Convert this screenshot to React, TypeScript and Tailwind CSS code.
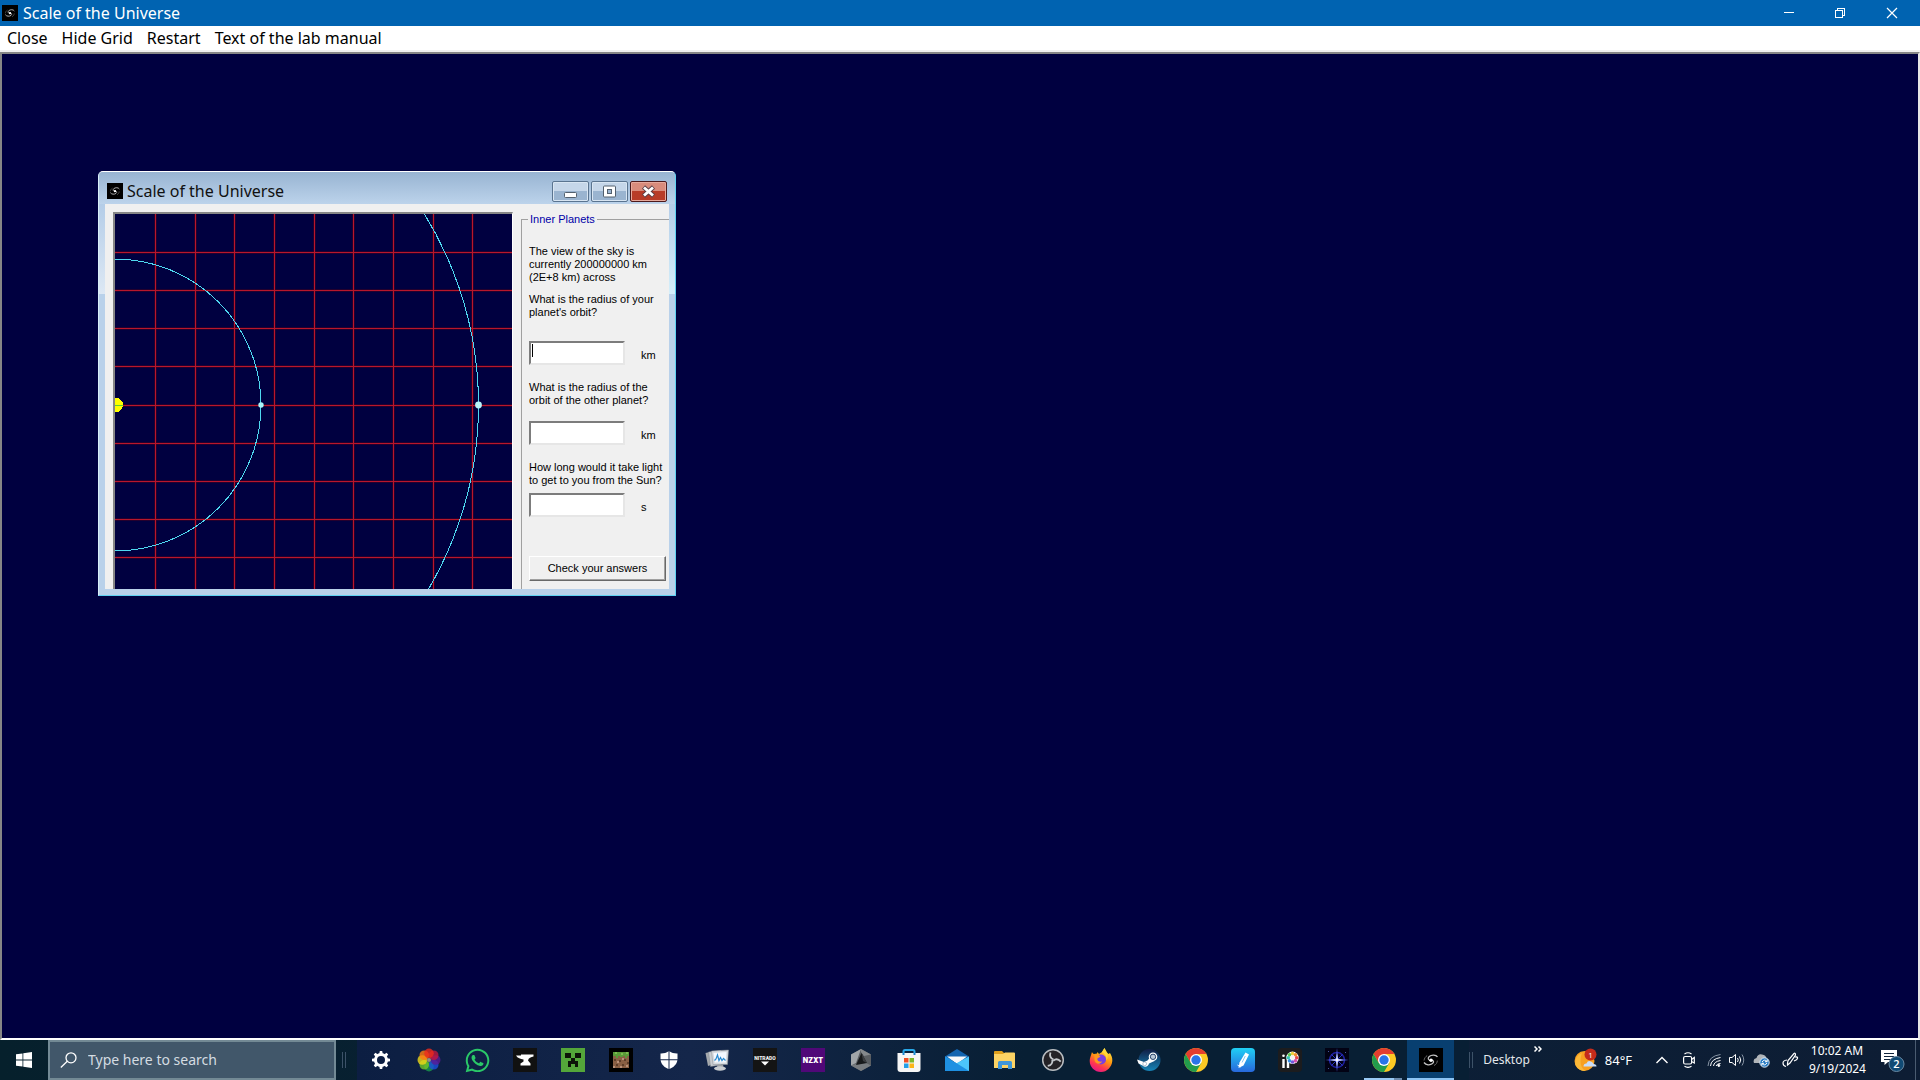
import type { ReactNode } from "react"
import { FaWhatsapp } from "react-icons/fa"

const VERTICAL_LINES = [40, 80, 119, 159, 199, 238, 278, 318, 357]
const HORIZONTAL_LINES = [38, 76, 114, 152, 191, 229, 267, 305, 343]

function GalaxyIcon({ className }: { className: string }) {
  return (
    <svg className={className} viewBox="0 0 24 24" fill="none">
      <rect width="24" height="24" fill="#000" />
      <path d="M18.500 9C17 6.500 12.500 6.500 10.200 8.500C8.500 10.200 9 12.500 12 12.500" stroke="#c4c4c4" strokeWidth="1.300" />
      <path d="M12 12C14.800 12 15.300 14 13.500 15.600C11 17.500 7 17.200 5 14.500" stroke="#c4c4c4" strokeWidth="1.300" />
      <path d="M5 12.500C5.200 10.500 6.500 8.500 8.200 7.600M15 17.500C17 16.800 18.400 14.500 18.300 12.600" stroke="#666" strokeWidth="1" />
      <circle cx="12" cy="12.200" r="1.700" fill="#fff" />
    </svg>
  )
}

function TitleBar() {
  return (
    <header className="flex h-[26px] shrink-0 items-center bg-[#0063b1] pr-px pl-0.5 text-white">
      <GalaxyIcon className="size-4" />
      <h1 className="ml-[5px] flex-1 text-[16px] leading-6">Scale of the Universe</h1>
      <button aria-label="Minimize" className="flex h-full w-[51px] items-center justify-center">
        <svg className="size-3" viewBox="0 0 12 12" stroke="currentColor" shapeRendering="crispEdges">
          <path d="M1 5.500H11" />
        </svg>
      </button>
      <button aria-label="Restore" className="flex h-full w-[51px] items-center justify-center">
        <svg className="size-3" viewBox="0 0 12 12" fill="none" stroke="currentColor" shapeRendering="crispEdges">
          <path d="M1.5 3.5H8.5V10.5H1.5ZM3.5 3V1.5H10.5V8.5H9" />
        </svg>
      </button>
      <button aria-label="Close window" className="flex h-full w-[54px] items-center justify-center">
        <svg className="size-3" viewBox="0 0 12 12" stroke="currentColor" strokeWidth="1.2">
          <path d="M1 1L11 11M11 1L1 11" />
        </svg>
      </button>
    </header>
  )
}

function MenuBar() {
  return (
    <nav className="flex h-[26px] shrink-0 items-end gap-[14px] border-b-2 border-[#f0f0f0] bg-white pl-[7px] text-[16px] leading-6 text-black">
      <button>Close</button>
      <button>Hide Grid</button>
      <button>Restart</button>
      <button>Text of the lab manual</button>
    </nav>
  )
}

function OrbitView() {
  return (
    <svg className="block" width="397" height="376" viewBox="0 0 397 376" shapeRendering="crispEdges">
      <rect width="397" height="376" fill="#000040" />
      <g stroke="#500018" strokeWidth="3" strokeOpacity="0.45">
        {VERTICAL_LINES.map((x) => (
          <line key={x} x1={x + 0.5} x2={x + 0.5} y1="0" y2="376" />
        ))}
        {HORIZONTAL_LINES.map((y) => (
          <line key={y} x1="0" x2="397" y1={y + 0.5} y2={y + 0.5} />
        ))}
      </g>
      <g stroke="#b8162c">
        {VERTICAL_LINES.map((x) => (
          <line key={x} x1={x + 0.5} x2={x + 0.5} y1="0" y2="376" />
        ))}
        {HORIZONTAL_LINES.map((y) => (
          <line key={y} x1="0" x2="397" y1={y + 0.5} y2={y + 0.5} />
        ))}
      </g>
      <g fill="none" stroke="#4fd8f0">
        <circle cx="0" cy="191" r="146" />
        <circle cx="0" cy="191" r="363.500" />
      </g>
      <circle cx="1" cy="191" r="7" fill="#ff0" />
      <path d="M0 191.500H8" stroke="#60d030" />
      <g shapeRendering="auto">
        <circle cx="146" cy="191" r="2.700" fill="#a8f4f8" />
        <circle cx="363.500" cy="191" r="3.400" fill="#b8f6fa" />
      </g>
    </svg>
  )
}

type QuestionProps = {
  id: string
  unit: string
  className: string
  gap: string
  caret?: boolean
  children: ReactNode
}

function Question({ id, unit, className, gap, caret, children }: QuestionProps) {
  return (
    <div className={className}>
      <label htmlFor={id} className="block">
        {children}
      </label>
      <div className={`relative flex items-end ${gap}`}>
        <input
          id={id}
          type="text"
          className="h-6 w-24 border-2 border-t-[#7c7c7c] border-r-[#e6e6e6] border-b-[#e6e6e6] border-l-[#7c7c7c] bg-white px-0.5 outline-none"
        />
        {caret && <span className="absolute top-[3px] left-[3px] h-[13px] w-px bg-black" />}
        <span className="ml-4 pb-[3px]">{unit}</span>
      </div>
    </div>
  )
}

function QuestionPanel() {
  return (
    <fieldset className="mt-px ml-2 min-w-0 flex-1 border-t border-l border-[#a0a0a0] pl-[7px] font-['Liberation_Sans',Arial,sans-serif] text-[11px] leading-[13px] text-black">
      <legend className="-ml-px px-0.5 text-[#0000a8]">Inner Planets</legend>
      <p className="mt-[19px]">
        The view of the sky is
        <br />
        currently 200000000 km
        <br />
        (2E+8 km) across
      </p>
      <Question id="own-orbit" unit="km" className="mt-[9px]" gap="mt-[22px]" caret>
        What is the radius of your
        <br />
        planet's orbit?
      </Question>
      <Question id="other-orbit" unit="km" className="mt-4" gap="mt-[14px]">
        What is the radius of the
        <br />
        orbit of the other planet?
      </Question>
      <Question id="light-time" unit="s" className="mt-4" gap="mt-[6px]">
        How long would it take light
        <br />
        to get to you from the Sun?
      </Question>
      <button className="mt-[39px] h-[25px] w-[137px] border border-t-white border-r-[#696969] border-b-[#696969] border-l-white bg-[#f0f0f0] shadow-[inset_-1px_-1px_0_#a0a0a0]">
        Check your answers
      </button>
    </fieldset>
  )
}

function ChildWindow() {
  return (
    <section className="absolute top-[117px] left-[96px] flex h-[425px] w-[578px] flex-col overflow-hidden rounded-t-[5px] border border-t-white border-r-[#5fd3f3] border-b-[#5fd3f3] border-l-[#d8eef8] bg-[#b9d1ea]">
      <div className="flex h-8 shrink-0 items-center bg-linear-to-b from-[#98b4d2] to-[#bcd3eb] pt-[6px] pr-2 pl-2 text-[#111]">
        <GalaxyIcon className="size-4" />
        <h2 className="ml-1 flex-1 text-[16px] leading-6">Scale of the Universe</h2>
        <div className="flex gap-0.5">
          <button
            aria-label="Minimize child window"
            className="flex h-[21px] w-[37px] items-center justify-center rounded-[2px] border border-[#5a7490] bg-linear-to-b from-[#c5d6e9] from-50% to-[#9ab4d0] to-50% shadow-[inset_0_0_0_1px_#d8e5f2]"
          >
            <svg className="size-[15px]" viewBox="0 0 15 15">
              <rect x="1.500" y="8.500" width="12" height="5" rx="1" fill="#fff" stroke="#53606e" />
            </svg>
          </button>
          <button
            aria-label="Maximize child window"
            className="flex h-[21px] w-[37px] items-center justify-center rounded-[2px] border border-[#5a7490] bg-linear-to-b from-[#c5d6e9] from-50% to-[#9ab4d0] to-50% shadow-[inset_0_0_0_1px_#d8e5f2]"
          >
            <svg className="size-[15px]" viewBox="0 0 15 15" fill="none">
              <rect x="1.500" y="2" width="12" height="11" rx="1" fill="#fff" stroke="#53606e" />
              <rect x="5.500" y="5.500" width="4" height="4" fill="#9ab4d0" stroke="#53606e" />
            </svg>
          </button>
          <button
            aria-label="Close child window"
            className="flex h-[21px] w-[37px] items-center justify-center rounded-[2px] border border-[#4c1a1c] bg-linear-to-b from-[#d98c7c] from-45% to-[#b83c28] to-50% shadow-[inset_0_0_0_1px_#e6a99c]"
          >
            <svg className="size-[15px]" viewBox="0 0 15 15">
              <path d="M2.500 3L12.500 12M12.500 3L2.500 12" stroke="#5b4048" strokeWidth="4.600" />
              <path d="M3 3.500L12 11.500M12 3.500L3 11.500" stroke="#fff" strokeWidth="2.800" />
            </svg>
          </button>
        </div>
      </div>
      <div className="flex min-h-0 flex-1">
        <div className="h-[90px] w-1.5 bg-linear-to-b from-[#b4cde8] to-[#dde8f4]" />
        <div className="flex min-w-0 flex-1 overflow-hidden bg-[#f0f0f0] pt-2 pl-2">
          <div className="shrink-0 border-t-2 border-r border-l-2 border-t-[#868686] border-r-white border-l-[#868686]">
            <OrbitView />
          </div>
          <QuestionPanel />
        </div>
        <div className="h-[90px] w-1.5 bg-linear-to-b from-[#b4cde8] to-[#d5effa]" />
      </div>
      <div className="h-1.5 shrink-0" />
    </section>
  )
}

const GEAR_TEETH = [0, 45, 90, 135, 180, 225, 270, 315]

function SettingsIcon() {
  return (
    <svg className="size-6" viewBox="0 0 24 24" fill="none">
      <circle cx="12" cy="12" r="5.500" stroke="#fff" strokeWidth="3" />
      {GEAR_TEETH.map((angle) => (
        <path key={angle} d="M10.300 6L10.800 3H13.200L13.700 6Z" fill="#fff" transform={`rotate(${angle} 12 12)`} />
      ))}
    </svg>
  )
}

const PETALS = [
  { angle: 180, color: "#1a9a4c" },
  { angle: 225, color: "#70c828" },
  { angle: 270, color: "#f0d818" },
  { angle: 315, color: "#ff7a10" },
  { angle: 135, color: "#1c50dc" },
  { angle: 90, color: "#5c1a96" },
  { angle: 45, color: "#c41840" },
  { angle: 0, color: "#ee2a1c" },
]

function PetalsIcon() {
  return (
    <svg className="size-6" viewBox="0 0 24 24">
      {PETALS.map((petal) => (
        <circle key={petal.angle} cx="12" cy="5.300" r="4.800" fill={petal.color} fillOpacity="0.8" transform={`rotate(${petal.angle} 12 12)`} />
      ))}
      <circle cx="12" cy="12" r="2" fill="#9a9080" />
    </svg>
  )
}

function AnvilIcon() {
  return (
    <svg className="size-6" viewBox="0 0 24 24">
      <rect width="24" height="24" fill="#111" />
      <path d="M3 7.500H8V6.500H20.500V8.500C18 8.800 15.500 10 15 12.500L17.500 15.500V17.500H7.500V15.500L10.500 13.500V11.500C7.500 11.200 4.500 10 3 7.500Z" fill="#fff" />
    </svg>
  )
}

function CreeperIcon() {
  return (
    <svg className="size-6" viewBox="0 0 24 24">
      <rect width="24" height="24" fill="#54a63a" />
      <path d="M4 5H10V10H4ZM14 5H20V10H14ZM10 10H14V13H17V19H14V16H10V19H7V13H10Z" fill="#0c1408" />
    </svg>
  )
}

function GrassBlockIcon() {
  return (
    <svg className="size-6" viewBox="0 0 24 24" shapeRendering="crispEdges">
      <rect width="24" height="24" fill="#000" />
      <rect x="4" y="4" width="16" height="16" fill="#8a6044" />
      <path d="M4 4H20V8H18V10H16V8H14V9H11V8H9V10H7V8H4Z" fill="#5a9a38" />
      <path d="M6 4H8V6H6ZM12 5H14V7H12ZM17 4H19V6H17Z" fill="#7cbc50" />
      <path d="M5 11H7V13H5ZM10 12H12V14H10ZM15 11H17V13H15ZM7 16H9V18H7ZM13 16H15V18H13ZM18 14H20V16H18Z" fill="#5e3e2a" />
      <path d="M8 13H10V15H8ZM13 10H15V12H13ZM17 17H19V19H17ZM4 18H6V20H4ZM11 18H13V20H11Z" fill="#b89078" />
    </svg>
  )
}

function ShieldIcon() {
  return (
    <svg className="size-6" viewBox="0 0 24 24" fill="#fff">
      <path d="M11.500 3.300C9.500 5 6.500 5.600 3.500 5.500V11.300H11.500ZM12.500 3.300C14.500 5 17.500 5.600 20.500 5.500V11.300H12.500ZM3.600 12.300H11.500V21C7.500 19.500 4.300 16.500 3.600 12.300ZM20.400 12.300H12.500V21C16.500 19.500 19.700 16.500 20.400 12.300Z" />
    </svg>
  )
}

function MonitorsIcon() {
  return (
    <svg className="size-6" viewBox="0 0 24 24">
      <path d="M.500 5L9 3V16L3 18Z" fill="#a4a8ac" />
      <path d="M3.500 4L16 2.500V17L5.500 18.500Z" fill="#c8ccd0" stroke="#80868c" strokeWidth=".5" />
      <path d="M6.500 3L23.500 2L22.500 16.500L8 16.500Z" fill="#d6dade" stroke="#8a9096" strokeWidth=".5" />
      <path d="M8.500 5L21.500 4L20.800 14.500L9.800 14.500Z" fill="#f4f9ff" />
      <path d="M9.500 12.500L11 11L12.500 7L14 12.500L15.500 9.500L17 12.500L18.500 10.500L20.500 12.500" fill="none" stroke="#2a8ad0" strokeWidth="1.200" />
      <path d="M12.500 16.500H18L18.500 19H12Z" fill="#9a9ea2" />
      <ellipse cx="15" cy="20.500" rx="6" ry="2.200" fill="#c8ccd0" />
    </svg>
  )
}

function NitradoIcon() {
  return (
    <svg className="size-6" viewBox="0 0 24 24">
      <rect width="24" height="24" fill="#141414" />
      <text x="12" y="12" textAnchor="middle" fontFamily="Roboto, sans-serif" fontSize="5" fontWeight="900" fill="#f0f0f0">
        NITRADO
      </text>
      <path d="M8 13.500H16L12 17.500Z" fill="#fff" />
    </svg>
  )
}

function NzxtIcon() {
  return (
    <svg className="size-6" viewBox="0 0 24 24">
      <rect width="24" height="24" fill="#500878" />
      <text x="12" y="14.500" textAnchor="middle" fontFamily="Inter, sans-serif" fontSize="7" fontWeight="900" fill="#fff">
        NZXT
      </text>
    </svg>
  )
}

function HexIcon() {
  return (
    <svg className="size-6" viewBox="0 0 24 24">
      <path d="M12 1L22 6.500V17.500L12 23L2 17.500V6.500Z" fill="#5a5e62" />
      <path d="M12 1L22 6.500L15 8L12 4Z" fill="#85898c" />
      <path d="M12 1L2 6.500V17.500L7 15Z" fill="#a2a6a9" />
      <path d="M2 17.500L12 23L22 17.500L17 15L7 16Z" fill="#787c80" />
      <path d="M12.500 5L18 15L7 17Z" fill="#17191b" />
      <path d="M12.500 5L18 15L14 13Z" fill="#3b3e41" />
    </svg>
  )
}

function StoreIcon() {
  return (
    <svg className="size-6" viewBox="0 0 24 24">
      <path d="M6.500 7V3.500Q6.500 2 8 2H16Q17.500 2 17.500 3.500V7" fill="none" stroke="#28a8e8" strokeWidth="2" />
      <path d="M.500 5H23.500V21Q23.500 24 20.500 24H3.500Q.500 24 .500 21Z" fill="#f6f6f6" />
      <path d="M6.500 5V7M17.500 5V7" stroke="#1c86d0" strokeWidth="2" />
      <path d="M7 10H11.500V14.500H7Z" fill="#f04f24" />
      <path d="M12.500 10H17V14.500H12.500Z" fill="#7db82b" />
      <path d="M7 15.500H11.500V20H7Z" fill="#22a0e8" />
      <path d="M12.500 15.500H17V20H12.500Z" fill="#fbb518" />
    </svg>
  )
}

function MailIcon() {
  return (
    <svg className="size-6" viewBox="0 0 24 24">
      <path d="M0 8.500L12 1L24 8.500V12H0Z" fill="#1264b0" />
      <path d="M2 8.500H22L12 16Z" fill="#f6f8fa" />
      <path d="M0 8.500L24 23H0Z" fill="#2ba8f0" />
      <path d="M24 8.500V23H1L11 15.500Z" fill="#4cc6fa" />
      <path d="M0 8.500L12 15.500L24 23H0Z" fill="#1e90e2" />
    </svg>
  )
}

function FolderIcon() {
  return (
    <svg className="size-6" viewBox="0 0 24 24">
      <path d="M1 4Q1 3 2 3H9L11 5H21Q22 5 22 6V12H1Z" fill="#e0a01c" />
      <path d="M1 6H10L12 4.500H21Q22 4.500 22 5.500V20H1Z" fill="#fcd364" />
      <path d="M5 21V14.500Q5 13 6.500 13H17.500Q19 13 19 14.500V21H15V17H9V21Z" fill="#3f96d8" />
    </svg>
  )
}

function ObsIcon() {
  return (
    <svg className="size-6" viewBox="0 0 24 24" fill="none">
      <circle cx="12" cy="12" r="10.300" fill="#242226" stroke="#b8bcc0" strokeWidth="1.500" />
      {[0, 120, 240].map((angle) => (
        <path key={angle} d="M12.500 11.500C10 10.500 8.300 8 9.500 4.500" stroke="#c4c8cc" strokeWidth="1.800" transform={`rotate(${angle} 12 12)`} />
      ))}
    </svg>
  )
}

function FirefoxIcon() {
  return (
    <svg className="size-6" viewBox="0 0 24 24">
      <defs>
        <linearGradient id="fox" x1="0.800" y1="0" x2="0.300" y2="1">
          <stop offset="0" stopColor="#fff04a" />
          <stop offset="0.450" stopColor="#ff980e" />
          <stop offset="0.750" stopColor="#ff3750" />
          <stop offset="1" stopColor="#e31587" />
        </linearGradient>
      </defs>
      <path d="M3 4C3.500 5 4 5.700 5 6L8 5.500L8.500 4L10 6L13 4L15.500 0C16 3 18 4 19.500 6L21 5C22.500 7.500 23.500 10 23.300 13C22.800 19 18 24 12 24C5.500 24 .700 19 .700 13C.700 9.500 2 8 3 4Z" fill="url(#fox)" />
      <circle cx="12" cy="11.500" r="5" fill="#7a3fe0" />
      <path d="M5.500 7C8 6 10 7 11.500 8.500C10.500 10 8.500 9.500 8.300 11C8.300 13 10.500 14 13 13.500C11.500 17 6 16 5.500 12Z" fill="#ff9a1e" />
      <path d="M13 4C16 5.500 18 9 17.500 12.500C20 8.500 18 4 15.500 0Z" fill="#ffd83a" />
    </svg>
  )
}

function SteamIcon() {
  return (
    <svg className="size-6" viewBox="0 0 24 24">
      <defs>
        <linearGradient id="steam" x1="0" y1="0" x2="0" y2="1">
          <stop offset="0" stopColor="#101d44" />
          <stop offset="1" stopColor="#1785b8" />
        </linearGradient>
      </defs>
      <circle cx="12.500" cy="12" r="11" fill="url(#steam)" />
      <path d="M0 11.500L7 14L10.500 12.500L13 9.500L17.500 13L12 15.500C11.500 18.500 8 20 5.500 17.500L1.500 15.500Z" fill="#fff" />
      <circle cx="7.700" cy="15.800" r="1.900" fill="#fff" stroke="#8098b0" strokeWidth=".6" />
      <circle cx="16" cy="8.800" r="4.300" fill="#fff" />
      <circle cx="16" cy="8.800" r="2.700" fill="#b8c8d8" stroke="#173460" strokeWidth=".9" />
    </svg>
  )
}

function ChromeIcon() {
  return (
    <svg className="size-6" viewBox="0 0 24 24">
      <circle cx="12" cy="12" r="12" fill="#fcc924" />
      <path d="M12 6H22.390A12 12 0 0 0 1.610 6L6.800 15Z" fill="#e43e2f" />
      <path d="M6.800 15L1.610 6A12 12 0 0 0 12 24L17.200 15Z" fill="#229c4c" />
      <circle cx="12" cy="12" r="6" fill="#fff" />
      <circle cx="12" cy="12" r="4.700" fill="#2a74e8" />
    </svg>
  )
}

function PenIcon() {
  return (
    <svg className="size-6" viewBox="0 0 24 24">
      <defs>
        <linearGradient id="pen" x1="0" y1="0" x2="0" y2="1">
          <stop offset="0" stopColor="#20d0f4" />
          <stop offset="1" stopColor="#2868dc" />
        </linearGradient>
      </defs>
      <rect width="24" height="24" rx="4" fill="url(#pen)" />
      <path d="M14.500 4.500L18 6.500L12.500 17.500L7.500 20L8.500 14.500Z" fill="#fff" />
      <path d="M14.300 8L11 14.500" stroke="#8cc8f4" />
      <path d="M6.500 17L9.500 19" stroke="#fff" />
    </svg>
  )
}

const WHEEL = ["#f4d03a", "#f49030", "#e84848", "#d850b0", "#7858d8", "#3890e8", "#38c4b8", "#60c850"]

function PaintIcon() {
  return (
    <svg className="size-6" viewBox="0 0 24 24">
      <rect width="24" height="24" rx="4" fill="#1c1c1e" />
      <path d="M5.500 11V20M10 9V20" stroke="#fff" strokeWidth="2.400" />
      <circle cx="5.500" cy="7.800" r="1.300" fill="#fff" />
      <circle cx="14.500" cy="9.800" r="6.200" fill="#fff" />
      {WHEEL.map((color, i) => (
        <circle key={color} cx="14.500" cy="5.600" r="1.800" fill={color} transform={`rotate(${i * 45} 14.5 9.8)`} />
      ))}
      <circle cx="14.500" cy="9.800" r="2.200" fill="#f4f4f4" />
    </svg>
  )
}

function StarIcon() {
  return (
    <svg className="size-6" viewBox="0 0 24 24" fill="none">
      <rect width="24" height="24" fill="#020214" />
      <circle cx="12" cy="12" r="7.500" stroke="#2020a0" strokeWidth="1.500" />
      <path d="M6.500 6.500L17.500 17.500M17.500 6.500L6.500 17.500" stroke="#2838c8" />
      <path d="M12 0L13 11L24 12L13 13L12 24L11 13L0 12L11 11Z" fill="#6074ff" />
      <path d="M12 5L12.800 11.200L19 12L12.800 12.800L12 19L11.200 12.800L5 12L11.200 11.200Z" fill="#fff" />
      <path d="M3 3H4V4H3ZM20 19H21V20H20ZM3 20H4V21H3ZM20 4H21V5H20Z" fill="#4858a0" />
    </svg>
  )
}

const PINNED = [
  { name: "Settings", icon: <SettingsIcon /> },
  { name: "Color petals", icon: <PetalsIcon /> },
  { name: "WhatsApp", icon: <FaWhatsapp className="size-[27px] text-[#2ac868]" /> },
  { name: "Anvil", icon: <AnvilIcon /> },
  { name: "Creeper", icon: <CreeperIcon /> },
  { name: "Grass block", icon: <GrassBlockIcon /> },
  { name: "Security", icon: <ShieldIcon /> },
  { name: "Performance", icon: <MonitorsIcon /> },
  { name: "Nitrado", icon: <NitradoIcon /> },
  { name: "NZXT", icon: <NzxtIcon /> },
  { name: "Armoury", icon: <HexIcon /> },
  { name: "Store", icon: <StoreIcon /> },
  { name: "Mail", icon: <MailIcon /> },
  { name: "Files", icon: <FolderIcon /> },
  { name: "OBS", icon: <ObsIcon /> },
  { name: "Firefox", icon: <FirefoxIcon /> },
]

const RECENT = [
  { name: "Steam", icon: <SteamIcon /> },
  { name: "Chrome", icon: <ChromeIcon /> },
  { name: "Notes", icon: <PenIcon /> },
  { name: "Paint", icon: <PaintIcon /> },
  { name: "Stars", icon: <StarIcon /> },
]

function Divider() {
  return <div className="h-4 w-1 shrink-0 border-x border-[#3d5268]" />
}

function Tray() {
  return (
    <div className="flex h-full items-center text-white">
      <Divider />
      <button className="ml-[10px] text-[12px] leading-4 text-[#e4e8ec]">Desktop</button>
      <button aria-label="More toolbars" className="mr-8 ml-1 self-start pt-[6px]">
        <svg className="h-[6px] w-2" viewBox="0 0 8 6" fill="none" stroke="#fff" strokeWidth="1.500">
          <path d="M.500 .500L3 3L.500 5.500M4.500 .500L7 3L4.500 5.500" />
        </svg>
      </button>
      <button className="mr-6 flex items-center gap-2 text-[13px] leading-5">
        <svg className="h-6 w-[23px]" viewBox="0 0 23 24">
          <circle cx="10.500" cy="13" r="10" fill="#f8a020" />
          <path d="M1.500 17A10 10 0 0 0 12 23C7 21 5 14 8 5A10 10 0 0 0 1.500 17Z" fill="#fbb838" />
          <path d="M9.500 18.500Q9.500 15.500 12.500 15.500Q14 12 17 13.500Q19.500 14.500 19.500 16Q22.500 16 22.500 18.500Z" fill="#c8dcf8" />
          <circle cx="16.500" cy="6.500" r="6" fill="#c42b1c" />
          <text x="16.500" y="9.500" textAnchor="middle" fontFamily="Open Sans, sans-serif" fontSize="8" fill="#fff">
            1
          </text>
        </svg>
        84°F
      </button>
      <div className="flex items-center gap-2">
        <button aria-label="Show hidden icons" className="mr-[7px]">
          <svg className="h-4 w-3" viewBox="0 0 12 16" fill="none" stroke="#fff" strokeWidth="1.400">
            <path d="M.500 11L6 5.500L11.500 11" />
          </svg>
        </button>
        <button aria-label="Camera">
          <svg className="h-4 w-3" viewBox="0 0 12 16" fill="none" stroke="#fff" strokeWidth="1.200">
            <rect x=".600" y="4.500" width="8" height="7.500" rx="1.500" />
            <path d="M8.500 7.500L11.300 5.500V11L8.500 9.500M1.500 2Q5 -.500 8.500 2M1.500 14.300Q5 16.500 8.500 14.300" />
          </svg>
        </button>
        <button aria-label="Network" className="ml-1">
          <svg className="h-4 w-[14px]" viewBox="0 0 14 16" fill="none" stroke="#fff">
            <path d="M1 14Q1.500 4 13.500 2.500" stroke="#8794a4" />
            <path d="M3.500 14Q4 7 13.500 5.500" />
            <path d="M6.500 14Q7 9.500 13.500 8.500" />
            <path d="M9 14Q10 11.500 13.500 11.500" />
            <circle cx="11.800" cy="13.500" r="1" fill="#fff" />
          </svg>
        </button>
        <button aria-label="Volume">
          <svg className="size-4" viewBox="0 0 16 16" fill="none" stroke="#fff">
            <path d="M.500 5.500H3L6.500 2.500V13.500L3 10.500H.500Z" />
            <path d="M8.500 6Q10 8 8.500 10M10.500 4.500Q13 8 10.500 11.500" />
            <path d="M13 2.500Q16.500 8 13 13.500" stroke="#8794a4" />
          </svg>
        </button>
        <button aria-label="Cloud sync">
          <svg className="h-4 w-[17px]" viewBox="0 0 17 16">
            <path d="M1 11Q-.500 7 3.500 6Q5 1.500 9 2.500Q13 3 13.500 6.500Q16.500 7 16 11Z" fill="#b0b4b8" />
            <circle cx="11.500" cy="10.500" r="4.700" fill="#2a7cc4" stroke="#dce8f4" />
            <path d="M9 10Q11.500 6.500 14 9.500M14 11Q11.500 14.500 9 11.500M14.200 7.500V9.700H12M8.800 13.500V11.300H11" fill="none" stroke="#fff" />
          </svg>
        </button>
        <button aria-label="Ink workspace" className="ml-1">
          <svg className="h-4 w-[17px]" viewBox="0 0 17 16" fill="none" stroke="#fff" strokeWidth="1.200">
            <path d="M5.500 11.500L6 8.500L12 1.500Q13.500 .500 13.500 3L8 11L5.500 13Z" />
            <path d="M5 8Q1 8.500 1 11Q1 14 4 14.500M13 5Q16 4.500 15.500 6.500Q15 8 12 9" />
          </svg>
        </button>
      </div>
      <time className="ml-[10px] w-[56px] text-center text-[12px] leading-[18px]">
        10:02 AM
        <br />
        9/19/2024
      </time>
      <button aria-label="Notifications" className="ml-4">
        <svg className="h-6 w-6" viewBox="0 0 24 24">
          <path d="M0 2H16V14H7L3.500 17V14H0Z" fill="#fff" />
          <path d="M3 5.500H13M3 8.500H13M3 11.500H10" stroke="#10243c" />
          <circle cx="15.500" cy="16" r="7.500" fill="#104a74" stroke="#6a8aa4" />
          <text x="15.500" y="20" textAnchor="middle" fontFamily="Open Sans, sans-serif" fontSize="11" fontWeight="600" fill="#fff">
            2
          </text>
        </svg>
      </button>
      <div className="ml-[10px] h-full w-[5px] border-l border-[#4a5b70]" />
    </div>
  )
}

function Taskbar() {
  return (
    <footer className="flex h-10 shrink-0 items-center bg-linear-to-r from-[#06202c] via-[#0b2038] to-[#0d1d34]">
      <button aria-label="Start" className="flex h-full w-12 items-center justify-center">
        <svg className="size-4" viewBox="0 0 16 16" fill="#fff">
          <path d="M0 2.300L6.500 1.400V7.600H0ZM7.300 1.300L16 0V7.600H7.300ZM0 8.400H6.500V14.600L0 13.700ZM7.300 8.400H16V16L7.300 14.700Z" />
        </svg>
      </button>
      <div className="flex h-full w-72 items-center gap-[11px] border-2 border-[#738a95] bg-[#41576a] px-[10px]">
        <svg className="h-4 w-[17px] shrink-0" viewBox="0 0 17 16" fill="none" stroke="#fff" strokeWidth="1.300">
          <circle cx="11" cy="5.800" r="5" />
          <path d="M7.300 9.300L.800 15.500" />
        </svg>
        <input
          type="text"
          aria-label="Search"
          placeholder="Type here to search"
          className="min-w-0 flex-1 text-[14px] leading-5 outline-none placeholder:text-[#d4dce2]"
        />
      </div>
      <div className="ml-[6px]">
        <Divider />
      </div>
      <div className="ml-[11px] flex h-full flex-1 bg-linear-to-r from-[#0c1e42] via-[#14264a] via-30% to-[#081f34] to-60%">
        {PINNED.map((app) => (
          <button key={app.name} aria-label={app.name} className="flex h-full w-12 items-center justify-center">
            {app.icon}
          </button>
        ))}
        {RECENT.map((app) => (
          <button key={app.name} aria-label={app.name} className="flex h-full w-[47px] items-center justify-center">
            {app.icon}
          </button>
        ))}
        <button aria-label="Chrome windows" className="relative flex h-full w-[47px] items-center justify-center">
          <ChromeIcon />
          <span className="absolute bottom-0 left-1 h-0.5 w-[38px] border-r-8 border-[#6d8caf] bg-[#99c9f4]" />
        </button>
        <button aria-label="Scale of the Universe" className="flex h-full w-[47px] items-center justify-center border-b-2 border-[#8cc4f4] bg-[#083f70] pt-0.5">
          <GalaxyIcon className="size-6" />
        </button>
      </div>
      <Tray />
    </footer>
  )
}

export default function App() {
  return (
    <div className="flex h-screen flex-col overflow-hidden bg-[#000040] font-['Noto_Sans','Open_Sans',sans-serif]">
      <TitleBar />
      <MenuBar />
      <main className="relative min-h-0 flex-1 border-2 border-t-[#868686] border-r-[#e6e6e6] border-b-white border-l-[#868686]">
        <ChildWindow />
      </main>
      <Taskbar />
    </div>
  )
}
